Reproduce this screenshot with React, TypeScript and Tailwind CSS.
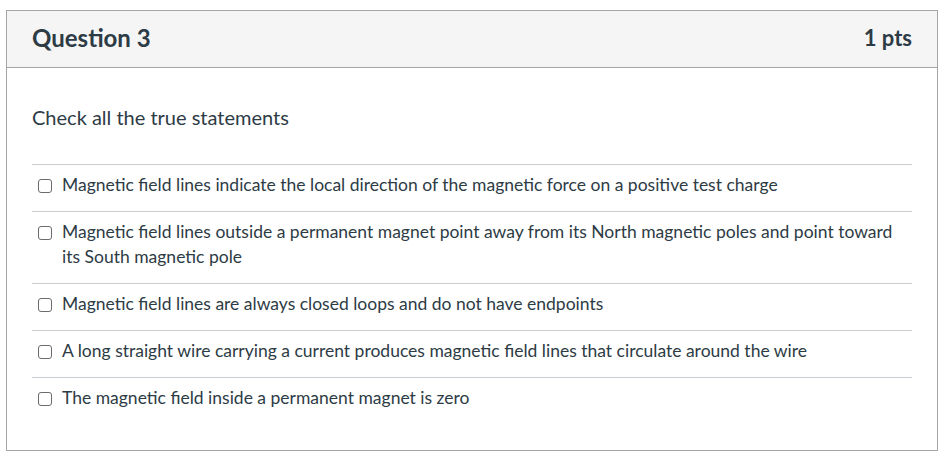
const answers = [
  'Magnetic field lines indicate the local direction of the magnetic force on a positive test charge',
  'Magnetic field lines outside a permanent magnet point away from its North magnetic poles and point toward its South magnetic pole',
  'Magnetic field lines are always closed loops and do not have endpoints',
  'A long straight wire carrying a current produces magnetic field lines that circulate around the wire',
  'The magnetic field inside a permanent magnet is zero',
]

export default function App() {
  return (
    <div className="h-[459px] w-[944px] bg-white pl-[6px] pt-[10px] text-[#2d3b45]" style={{ fontFamily: 'Lato, "Open Sans", sans-serif' }}>
      <div className="h-[441px] w-[932px] border border-[#a5a5a5]">
        <div className="flex h-[57px] items-center justify-between border-b border-[#a5a5a5] bg-[#f5f5f5] px-[25px] pb-[3px]">
          <h2 className="text-[24px] font-bold">Question 3</h2>
          <span className="text-[22px] font-bold">1 pts</span>
        </div>

        <div className="px-[25px] pt-[36px]">
          <p className="text-[20px] leading-[26px]">Check all the true statements</p>

          <div className="mt-[34px]">
            {answers.map((text) => (
              <label key={text} className="flex gap-[10px] border-t border-[#c7cdd1] pt-[7px] pb-[14px] pl-[6px] pr-[10px] text-[17.5px] leading-[25px]">
                <span className="mt-[7px] h-[14px] w-[14px] shrink-0 rounded-[3px] border-[1.5px] border-[#6b6b6b] bg-white" />
                <span>{text}</span>
              </label>
            ))}
          </div>
        </div>
      </div>
    </div>
  )
}
